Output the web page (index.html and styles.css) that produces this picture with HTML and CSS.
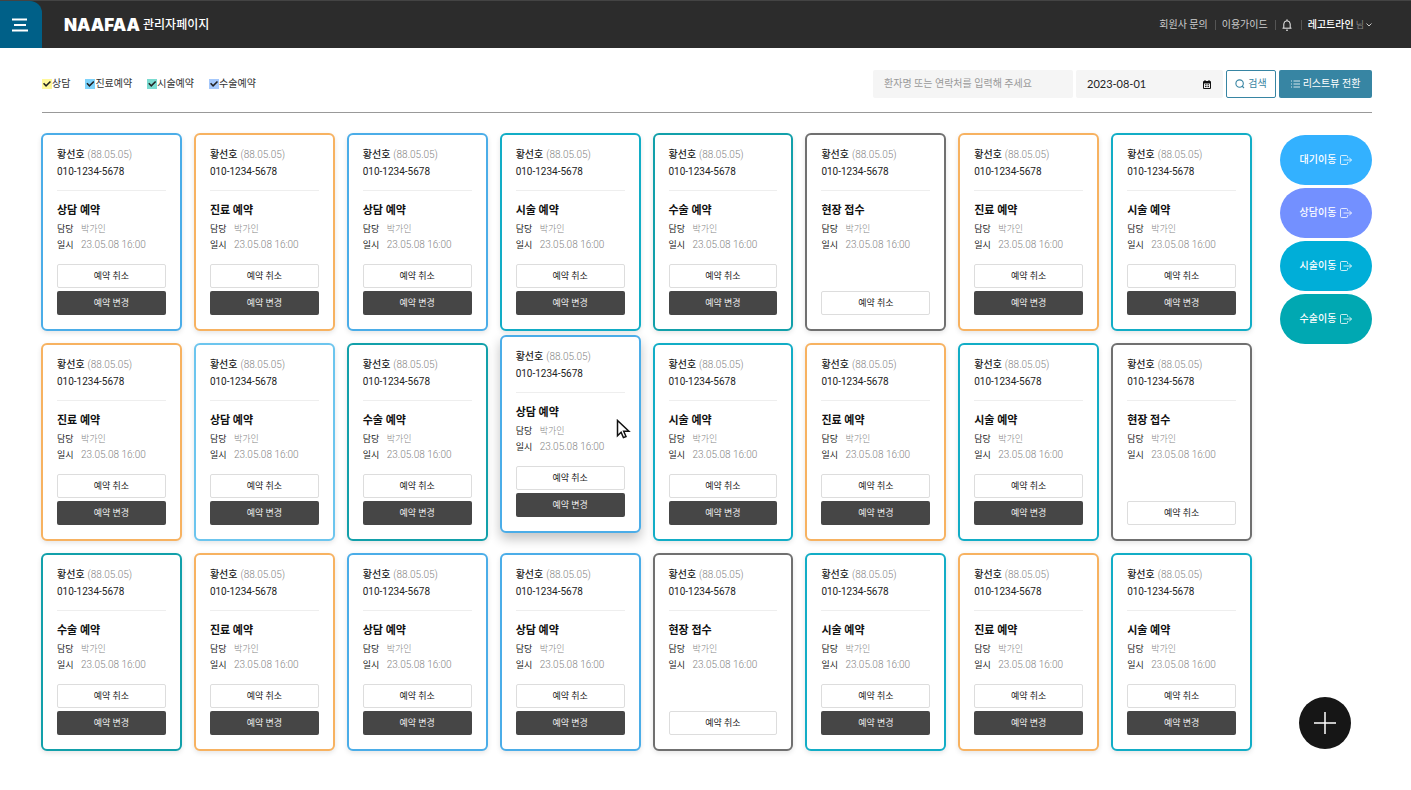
FILE: index.html
```html
<!DOCTYPE html>
<html lang="ko">
<head>
<meta charset="utf-8">
<meta name="viewport" content="width=device-width, initial-scale=1">
<title>NAAFAA 관리자페이지</title>
<link rel="stylesheet" href="styles.css">
</head>
<body>
<header class="header">
  <button class="menu-button" type="button" aria-label="메뉴">
    <svg width="16" height="14" viewBox="0 0 16 14" fill="none" stroke="currentColor" stroke-width="1.8"><path d="M0 1.500h15M2 7h12M0 12.500h16"/></svg>
  </button>
  <h1 class="brand"><span class="brand-logo">NAAFAA</span><span class="brand-title">관리자페이지</span></h1>
  <nav class="links">
    <a href="#">회원사 문의</a>
    <a href="#">이용가이드</a>
    <button class="bell" type="button" aria-label="알림">
      <svg width="10" height="12" viewBox="0 0 10 12" fill="none" stroke="currentColor" stroke-width="1"><path d="M.5 9.200h9M1.800 9V5a3.200 3.200 0 0 1 6.400 0v4M5 .3v1.500M4 11.200h2"/></svg>
    </button>
    <button class="account" type="button"><strong>레고트라인</strong> <span class="suffix">님</span>
      <svg width="6" height="4" viewBox="0 0 6 4" fill="none" stroke="currentColor" stroke-width="1"><path d="M.5.5 3 3 5.500.5"/></svg>
    </button>
  </nav>
</header>

<main>
  <form class="toolbar">
    <div class="filters">
      <label class="filter"><input class="check check-consult" type="checkbox" checked>상담</label>
      <label class="filter"><input class="check check-clinic" type="checkbox" checked>진료예약</label>
      <label class="filter"><input class="check check-procedure" type="checkbox" checked>시술예약</label>
      <label class="filter"><input class="check check-surgery" type="checkbox" checked>수술예약</label>
    </div>
    <div class="search">
      <input class="keyword" type="text" aria-label="환자 검색" placeholder="환자명 또는 연락처를 입력해 주세요">
      <div class="date">
        <input class="date-input" type="text" aria-label="날짜" value="2023-08-01">
        <button class="date-button" type="button" aria-label="달력 열기">
          <svg width="8" height="9" viewBox="0 0 8 9"><path fill="currentColor" fill-rule="evenodd" d="M1 1h.5V0h1v1h3V0h1v1H7q1 0 1 1v6q0 1-1 1H1Q0 9 0 8V2q0-1 1-1zm0 2.500V8h6V3.500z"/><path stroke="currentColor" stroke-width="1" stroke-dasharray="1 .5" d="M2 4.800h4M2 6.600h4"/></svg>
        </button>
      </div>
      <button class="button button-search" type="button">
        <svg width="10" height="10" viewBox="0 0 10 10" fill="none" stroke="currentColor" stroke-width="1.100"><circle cx="4.600" cy="4.600" r="3.700"/><path d="m7 7 2 2"/></svg>
        검색
      </button>
      <button class="button button-list" type="button">
        <svg width="9" height="8" viewBox="0 0 9 8" fill="none" stroke="currentColor" stroke-width=".8"><path d="M0 1h1M2.500 1H9M0 4h1M2.500 4H9M0 7h1M2.500 7H9"/></svg>
        리스트뷰 전환
      </button>
    </div>
  </form>

  <div class="board">
    <section class="cards" id="cards" aria-label="예약 목록"></section>
    <aside class="moves">
      <button class="move move-wait" type="button">대기이동 <svg class="exit" viewBox="0 0 12 10"><path d="M7.500 2.800V1.500q0-1-1-1h-5q-1 0-1 1v7q0 1 1 1h5q1 0 1-1V7.200M3.500 5h8M9 2.500 11.500 5 9 7.500"/></svg></button>
      <button class="move move-consult" type="button">상담이동 <svg class="exit" viewBox="0 0 12 10"><path d="M7.500 2.800V1.500q0-1-1-1h-5q-1 0-1 1v7q0 1 1 1h5q1 0 1-1V7.200M3.500 5h8M9 2.500 11.500 5 9 7.500"/></svg></button>
      <button class="move move-procedure" type="button">시술이동 <svg class="exit" viewBox="0 0 12 10"><path d="M7.500 2.800V1.500q0-1-1-1h-5q-1 0-1 1v7q0 1 1 1h5q1 0 1-1V7.200M3.500 5h8M9 2.500 11.500 5 9 7.500"/></svg></button>
      <button class="move move-surgery" type="button">수술이동 <svg class="exit" viewBox="0 0 12 10"><path d="M7.500 2.800V1.500q0-1-1-1h-5q-1 0-1 1v7q0 1 1 1h5q1 0 1-1V7.200M3.500 5h8M9 2.500 11.500 5 9 7.500"/></svg></button>
    </aside>
  </div>
</main>

<button class="add" type="button" aria-label="예약 추가">
  <svg width="24" height="24" viewBox="0 0 24 24" fill="none" stroke="currentColor" stroke-width="1.500"><path d="M12 1v22M1 12h22"/></svg>
</button>
<script src="cards.js"></script>
</body>
</html>
```
FILE: styles.css
```css
* { box-sizing: border-box; }

body {
  margin: 0;
  min-height: 100vh;
  background: #fff;
  color: #222;
  font-family: Roboto, "Noto Sans CJK KR", sans-serif;
  font-size: 10px;
  line-height: 16px;
}

button, input { font: inherit; color: inherit; margin: 0; }
button { border: 0; padding: 0; background: none; cursor: pointer; }
svg { display: block; flex: none; }

/* Header */
.header {
  display: flex;
  align-items: center;
  height: 48px;
  padding-right: 39px;
  background: #2c2c2c;
  border-top: 1px solid #444;
  color: #fff;
}
.menu-button {
  display: flex;
  align-items: center;
  justify-content: center;
  align-self: stretch;
  width: 42px;
  padding-right: 2px;
  background: #006088;
  border-radius: 0 12px 0 0;
}
.brand { display: flex; align-items: center; gap: 3px; margin: 0 0 0 22px; }
.brand-logo { font: 900 17px/24px Inter, sans-serif; }
.brand-title { font-size: 12px; font-weight: 500; line-height: 24px; }
.links { display: flex; align-items: center; margin-left: auto; color: #ccc; }
.links a { color: inherit; text-decoration: none; }
.links > * { padding-left: 7px; margin-left: 7px; position: relative; }
.links > * + *::before {
  content: "";
  position: absolute;
  left: 0;
  top: calc(50% - 5px);
  height: 10px;
  border-left: 1px solid #555;
}
.bell { padding-right: 2px; color: #eee; }
.account { display: flex; align-items: center; gap: 2px; }
.account strong { color: #fff; font-weight: 500; }
.suffix { color: #888; font-size: 9px; }

/* Toolbar */
.toolbar {
  display: flex;
  align-items: center;
  justify-content: space-between;
  margin: 0 39px 0 42px;
  padding: 22px 0 14px;
  border-bottom: 1px solid #999;
}
.filters { display: flex; gap: 15px; }
.filter { display: flex; align-items: center; color: #333; }
.check {
  appearance: none;
  width: 10px;
  height: 10px;
  display: grid;
  place-items: center;
}
.check:checked::before {
  content: "";
  width: 8px;
  height: 6px;
  background: #222;
  clip-path: polygon(0 45%, 14% 28%, 38% 62%, 86% 0, 100% 18%, 38% 100%);
}
.check-consult { background: #fff899; }
.check-clinic { background: #7ed3fb; }
.check-procedure { background: #7adbd0; }
.check-surgery { background: #a5c8fb; }

.search { display: flex; gap: 3px; height: 28px; }
.keyword, .date { border: 0; border-radius: 2px; background: #f5f5f5; }
.keyword { width: 200px; padding: 0 11px; }
.keyword::placeholder { color: #999; opacity: 1; }
.date { display: flex; align-items: center; width: 147px; padding: 0 12px 0 11px; }
.date-input {
  flex: 1;
  min-width: 0;
  padding: 0;
  border: 0;
  background: none;
  font-family: Lato, sans-serif;
  font-size: 11px;
}
.date-button { color: #111; }
.button { display: flex; align-items: center; justify-content: center; border-radius: 2px; }
.button-search { gap: 3px; width: 50px; border: 1px solid #3785a3; color: #3785a3; }
.button-list { gap: 3px; width: 93px; background: #3785a3; color: #fff; }

/* Board */
.board { display: flex; align-items: flex-start; gap: 28px; padding: 20px 39px 39px 41px; }
.cards { flex: 1; display: grid; grid-template-columns: repeat(8, minmax(0, 1fr)); gap: 12px; }
.card {
  display: flex;
  flex-direction: column;
  padding: 11px 14px 14px;
  border: 2px solid;
  border-radius: 6px;
  background: #fff;
  box-shadow: 0 2px 5px rgba(0, 0, 0, .1);
}
.card-consult { border-color: #4bade8; }
.card-consult-light { border-color: #6cc5ee; }
.card-clinic { border-color: #f7b261; }
.card-procedure { border-color: #12adc6; }
.card-surgery { border-color: #12a0aa; }
.card-walkin { border-color: #707070; }
.card-active { transform: translateY(-8px); box-shadow: 0 6px 12px rgba(0, 0, 0, .24); }
.patient { line-height: 17px; padding-bottom: 10px; border-bottom: 1px solid #eee; white-space: nowrap; }
.patient-name { display: flex; gap: 3px; margin: 0; font-size: 10px; font-weight: 500; }
.birth { color: #858585; font-weight: 300; }
.phone { margin: 0; }
.kind { margin: 10px 0 0; font-size: 11px; font-weight: 700; line-height: 20px; color: #111; }
.detail { display: grid; grid-template-columns: 17px 1fr; column-gap: 7px; margin: 0; white-space: nowrap; }
.detail dt { font-size: 9px; }
.detail dd { margin: 0; color: #858585; font-weight: 300; }
.detail .manager { font-size: 9px; }
.actions { display: flex; flex-direction: column; gap: 3px; margin-top: auto; padding-top: 11px; }
.action { height: 24px; border-radius: 2px; font-size: 9px; }
.action-cancel { border: 1px solid #ddd; }
.action-change { background: #464646; color: #eee; }

/* Queue shortcuts */
.moves { display: flex; flex-direction: column; gap: 3px; width: 92px; padding-top: 2px; }
.move {
  display: flex;
  align-items: center;
  justify-content: center;
  gap: 4px;
  height: 50px;
  border-radius: 25px;
  color: #fff;
  font-weight: 500;
}
.exit { width: 12px; height: 10px; fill: none; stroke: currentColor; stroke-width: .8; }
.move-wait { background: #33b1ff; }
.move-consult { background: #7390ff; }
.move-procedure { background: #00aed8; }
.move-surgery { background: #00a8b2; }

.add {
  position: fixed;
  right: 60px;
  bottom: 41px;
  display: grid;
  place-items: center;
  width: 52px;
  height: 52px;
  border-radius: 50%;
  background: #161616;
  color: #fff;
}
.cursor { position: absolute; right: 8px; top: 82px; }
```
FILE: cards.js
```js
const kinds = {
  consult: "상담 예약",
  "consult-light": "상담 예약",
  clinic: "진료 예약",
  procedure: "시술 예약",
  surgery: "수술 예약",
  walkin: "현장 접수"
};

const schedule = [
  "consult", "clinic", "consult", "procedure", "surgery", "walkin", "clinic", "procedure",
  "clinic", "consult-light", "surgery", "consult", "procedure", "clinic", "procedure", "walkin",
  "surgery", "clinic", "consult", "consult", "walkin", "procedure", "clinic", "procedure"
];
const activeIndex = 11;

const pointer = `<svg class="cursor" width="15" height="20" viewBox="0 0 15 20" aria-hidden="true">
  <path d="M1.500 1.500v15.300l3.600-3.500 2.300 5.300 2.600-1.100-2.300-5.200h5.200z" fill="#fff" stroke="#111" stroke-width="1.500"/></svg>`;

document.getElementById("cards").innerHTML = schedule.map((kind, index) => {
  const active = index === activeIndex;
  return `<article class="card card-${kind}${active ? " card-active" : ""}">
    <div class="patient">
      <h2 class="patient-name">황선호 <span class="birth">(88.05.05)</span></h2>
      <p class="phone">010-1234-5678</p>
    </div>
    <h3 class="kind">${kinds[kind]}</h3>
    <dl class="detail">
      <dt>담당</dt><dd class="manager">박가인</dd>
      <dt>일시</dt><dd>23.05.08 16:00</dd>
    </dl>
    <div class="actions">
      <button class="action action-cancel" type="button">예약 취소</button>
      ${kind === "walkin" ? "" : '<button class="action action-change" type="button">예약 변경</button>'}
    </div>
    ${active ? pointer : ""}
  </article>`;
}).join("");
```
